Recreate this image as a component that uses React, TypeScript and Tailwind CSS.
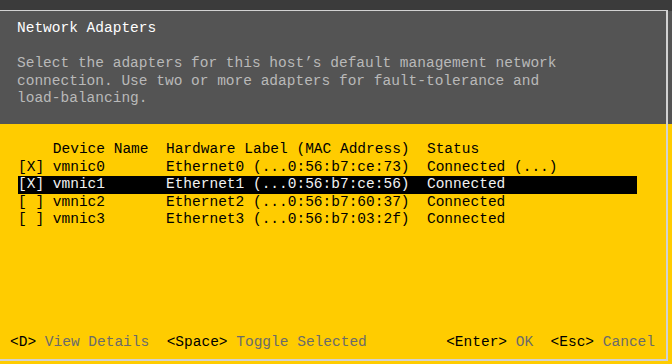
import React from 'react';

const rows = [
  { sel: true, name: 'vmnic0', label: 'Ethernet0 (...0:56:b7:ce:73)', status: 'Connected (...)' },
  { sel: true, name: 'vmnic1', label: 'Ethernet1 (...0:56:b7:ce:56)', status: 'Connected', active: true },
  { sel: false, name: 'vmnic2', label: 'Ethernet2 (...0:56:b7:60:37)', status: 'Connected' },
  { sel: false, name: 'vmnic3', label: 'Ethernet3 (...0:56:b7:03:2f)', status: 'Connected' },
];

const pad = (s: string, n: number) => s + ' '.repeat(Math.max(0, n - s.length));

const App = () => {
  return (
    <div
      className="relative w-[672px] h-[364px] overflow-hidden flex flex-col bg-[#3b3b3b] text-[14.5px] leading-[17.5px]"
      style={{ fontFamily: '"Liberation Mono", "DejaVu Sans Mono", monospace' }}
    >
      {/* top strip */}
      <div className="h-[11px] shrink-0" />

      {/* header panel */}
      <div className="h-[113px] shrink-0 bg-[#545454] pt-[9px] px-[17px]">
        <div className="text-white whitespace-pre">Network Adapters</div>
        <div className="mt-[17.5px] text-[#b9b9b9] whitespace-pre">
          <div>Select the adapters for this host’s default management network</div>
          <div>connection. Use two or more adapters for fault-tolerance and</div>
          <div>load-balancing.</div>
        </div>
      </div>

      {/* body */}
      <div className="flex-1 bg-[#ffcc00] flex flex-col pt-[17px] pb-[13px]">
        <div className="pl-[18px] text-black whitespace-pre">
          <div>{pad('    Device Name', 17) + pad('Hardware Label (MAC Address)', 30) + 'Status'}</div>
          {rows.map((r) => (
            <div
              key={r.name}
              className={r.active ? 'w-[619px] bg-black text-[#f2f2f2]' : ''}
            >
              {pad((r.sel ? '[X] ' : '[ ] ') + r.name, 17) + pad(r.label, 30) + r.status}
            </div>
          ))}
        </div>

        {/* key hints */}
        <div className="mt-auto flex justify-between pl-[10px] pr-[17px] whitespace-pre">
          <div>
            <span className="text-black">{'<D>'}</span>
            <span className="text-[#6b6b6b]">{' View Details  '}</span>
            <span className="text-black">{'<Space>'}</span>
            <span className="text-[#6b6b6b]">{' Toggle Selected'}</span>
          </div>
          <div>
            <span className="text-black">{'<Enter>'}</span>
            <span className="text-[#6b6b6b]">{' OK  '}</span>
            <span className="text-black">{'<Esc>'}</span>
            <span className="text-[#6b6b6b]">{' Cancel'}</span>
          </div>
        </div>
      </div>

      {/* window frame drawn over both panels */}
      <div className="pointer-events-none absolute left-0 top-[10px] w-[668px] h-[351px] border-t border-r-2 border-b-2 border-[#d2d2d2]" />
    </div>
  );
};

export default App;
